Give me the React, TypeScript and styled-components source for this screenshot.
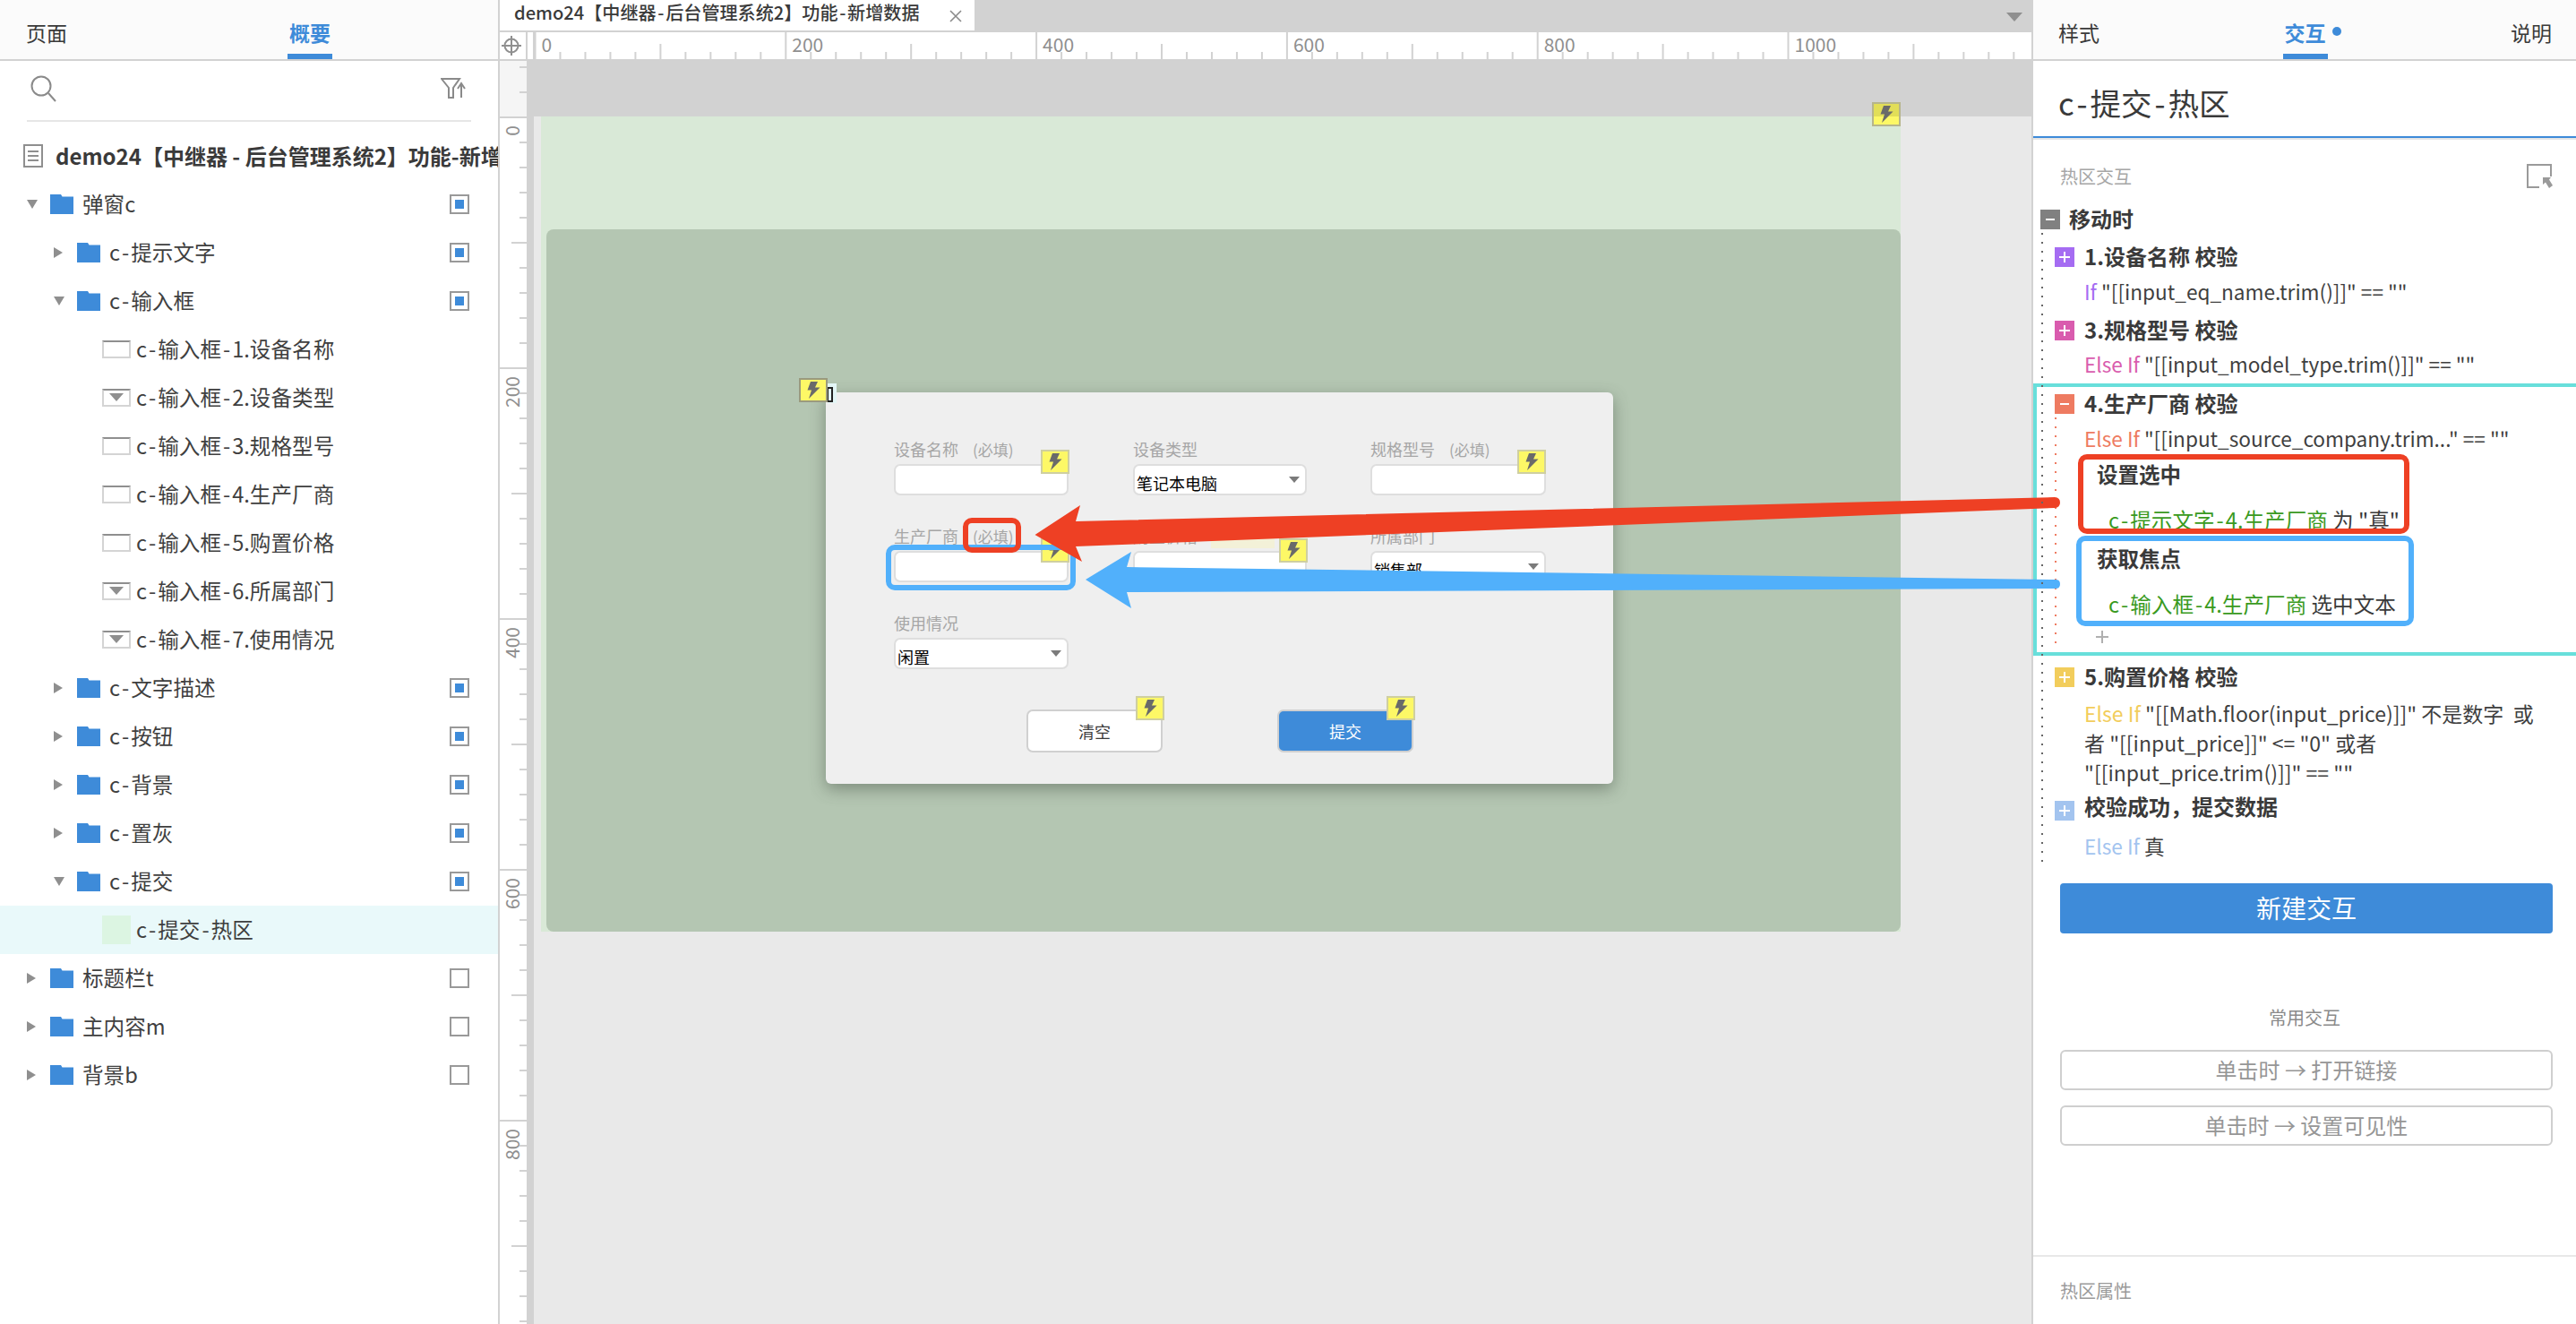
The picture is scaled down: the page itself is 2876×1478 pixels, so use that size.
import React from 'react';
import styled, { createGlobalStyle } from 'styled-components';

const FONT = `"Noto Sans CJK SC", "Noto Sans", sans-serif`;
const BLUE = '#3e8bd9';
const LINE = '#d2d2d2';
const RED = '#ee4024';
const SKY = '#51b0fb';

const Global = createGlobalStyle`
  html, body { margin: 0; padding: 0; background: #fff; overflow: hidden; }
  body { font-family: ${FONT}; color: #3a3a3a; }
  * { box-sizing: border-box; }
`;

const Page = styled.div`
  position: relative;
  display: flex;
  width: 2876px;
  height: 1478px;
  overflow: hidden;
`;

/* the reference's hyphens sit wider than this font's */
const Hyphen = styled.span`
  margin: 0 0.085em;
`;
const hy = (s: string) => {
  const parts = s.split('-');
  return parts.map((p, i) => (
    <React.Fragment key={i}>
      {p}
      {i < parts.length - 1 && <Hyphen>-</Hyphen>}
    </React.Fragment>
  ));
};

/* ---------- shared tabs ---------- */
const TabBar = styled.div<{ $spread?: boolean }>`
  display: flex;
  justify-content: ${p => (p.$spread ? 'space-between' : 'flex-start')};
  height: 68px;
  padding: 0 ${p => (p.$spread ? '27px 0 28px' : '0 0 29px')};
  background: #fbfbfb;
  border-bottom: 2px solid ${LINE};
`;
const Tab = styled.div<{ $active?: boolean; $gap?: number }>`
  position: relative;
  height: 66px;
  padding-top: 17px;
  margin-left: ${p => p.$gap ?? 0}px;
  font-size: 23px;
  line-height: 38px;
  color: ${p => (p.$active ? BLUE : '#3a3a3a')};
  font-weight: ${p => (p.$active ? 700 : 400)};
  &::after {
    content: '';
    display: ${p => (p.$active ? 'block' : 'none')};
    position: absolute;
    left: -2px;
    right: -2px;
    bottom: 0;
    height: 6px;
    background: ${BLUE};
  }
`;
const TabDot = styled.span`
  position: absolute;
  left: 53px;
  top: 30px;
  width: 10px;
  height: 10px;
  border-radius: 50%;
  background: ${BLUE};
`;

/* ---------- left panel ---------- */
const LeftPanel = styled.aside`
  flex: none;
  width: 558px;
  height: 100%;
  border-right: 2px solid ${LINE};
  background: #fff;
`;
const SearchRow = styled.div`
  display: flex;
  align-items: center;
  justify-content: space-between;
  height: 68px;
  margin: 0 30px;
  padding: 0 6px 4px 4px;
  border-bottom: 2px solid #e6e6e6;
`;
const DocRow = styled.div`
  display: flex;
  align-items: center;
  height: 65px;
  padding: 11px 0 0 26px;
  gap: 14px;
  white-space: nowrap;
  overflow: hidden;
  font-size: 24px;
  font-weight: 700;
  color: #3a3a3a;
`;
const DocTitle = styled.span`
  padding-bottom: 2px;
`;
const Tree = styled.div`
  display: flex;
  flex-direction: column;
`;
const TreeRow = styled.div<{ $lvl: number; $leaf?: boolean; $sel?: boolean }>`
  display: flex;
  align-items: center;
  height: 54px;
  padding-left: ${p => (p.$leaf ? 114 : 30 + p.$lvl * 30)}px;
  padding-right: 32px;
  font-size: 23.6px;
  white-space: nowrap;
  color: #3f3f3f;
  background: ${p => (p.$sel ? '#e9f9fa' : 'transparent')};
`;
const Caret = styled.span`
  flex: none;
  width: 26px;
  display: flex;
  align-items: center;
`;
const TriDown = styled.i`
  display: block;
  width: 0;
  height: 0;
  border-left: 6.5px solid transparent;
  border-right: 6.5px solid transparent;
  border-top: 10px solid #8f8f8f;
`;
const TriRight = styled.i`
  display: block;
  width: 0;
  height: 0;
  border-top: 6.5px solid transparent;
  border-bottom: 6.5px solid transparent;
  border-left: 10px solid #8f8f8f;
`;
const FolderLabel = styled.span`
  margin-left: 10px;
  padding-bottom: 3px;
`;
const LeafLabel = styled.span`
  margin-left: 6px;
  padding-bottom: 3px;
`;
const Check = styled.span<{ $on?: boolean }>`
  flex: none;
  margin-left: auto;
  width: 22px;
  height: 22px;
  border: 2px solid #999;
  background: #fff;
  display: flex;
  align-items: center;
  justify-content: center;
  &::after {
    content: '';
    display: ${p => (p.$on ? 'block' : 'none')};
    width: 10px;
    height: 10px;
    background: ${BLUE};
  }
`;
const WidgetIcon = styled.span<{ $drop?: boolean }>`
  flex: none;
  width: 32px;
  height: 20px;
  display: flex;
  align-items: center;
  justify-content: center;
  background: #fff;
  border: 2px solid #d4d4d4;
  border-top-color: #8f8f8f;
  &::after {
    content: '';
    display: ${p => (p.$drop ? 'block' : 'none')};
    width: 0;
    height: 0;
    margin-top: -2px;
    border-left: 8px solid transparent;
    border-right: 8px solid transparent;
    border-top: 9px solid #8f8f8f;
  }
`;
const HotIcon = styled.span`
  flex: none;
  width: 32px;
  height: 32px;
  background: #dcf5e2;
`;

/* ---------- centre ---------- */
const Center = styled.main`
  flex: none;
  width: 1710px;
  height: 100%;
  display: flex;
  flex-direction: column;
`;
const DocStrip = styled.div`
  flex: none;
  display: flex;
  align-items: flex-start;
  justify-content: space-between;
  height: 36px;
  background: ${LINE};
`;
const DocTab = styled.div`
  display: flex;
  align-items: center;
  width: 530px;
  height: 34px;
  padding: 0 14px 8px 16px;
  background: #fff;
  font-size: 20.1px;
  font-weight: 500;
  color: #3a3a3a;
  white-space: nowrap;
`;
const DocTabClose = styled.svg`
  margin: 10px 0 0 auto;
`;
const StripMenu = styled.i`
  display: block;
  margin: 14px 10px 0 0;
  width: 0;
  height: 0;
  border-left: 9px solid transparent;
  border-right: 9px solid transparent;
  border-top: 10px solid #8f8f8f;
`;
const RulerRow = styled.div`
  flex: none;
  display: flex;
  height: 32px;
  background: #fff;
  border-bottom: 2px solid ${LINE};
`;
const Corner = styled.div`
  flex: none;
  width: 31px;
  display: flex;
  align-items: center;
  justify-content: center;
  padding-right: 3px;
  border-right: 2px solid ${LINE};
`;
const CornerStrip = styled.div`
  flex: none;
  width: 8px;
  border-right: 2px solid ${LINE};
`;
const Body = styled.div`
  flex: 1;
  min-height: 0;
  display: flex;
`;
const VRuler = styled.div`
  flex: none;
  width: 30px;
  background: #fff;
`;
const GutterStrip = styled.div`
  flex: none;
  width: 8px;
  background: ${LINE};
`;
const Canvas = styled.div`
  flex: 1;
  min-width: 0;
  background: #e9e9e9;
`;
const CanvasTop = styled.div`
  height: 62px;
  background: ${LINE};
`;
const Artboard = styled.div`
  position: relative;
  width: 1518px;
  height: 910px;
  margin-left: 8px;
  padding: 126px 0 0 6px;
  background: #d9e9d7;
`;
const Shade = styled.div`
  height: 784px;
  padding: 182px 0 0 312px;
  border-radius: 8px;
  background: #b4c6b2;
`;
const Dialog = styled.div`
  position: relative;
  width: 879px;
  height: 437px;
  padding: 52px 0 0 76px;
  border-radius: 6px;
  background: #efefef;
  box-shadow: 0 6px 18px rgba(60, 70, 60, 0.45);
`;
const FormGrid = styled.div`
  display: grid;
  grid-template-columns: 267px 265px 196px;
  row-gap: 34px;
`;
const Field = styled.div<{ $w: number }>`
  position: relative;
  width: ${p => p.$w}px;
`;
const FieldLabel = styled.div`
  height: 28px;
  font-size: 18px;
  line-height: 22px;
  color: #a6a6a6;
  white-space: nowrap;
`;
const Required = styled.span`
  margin-left: 16px;
  font-size: 17px;
`;
const Tint = styled.span`
  position: absolute;
  left: 87px;
  top: 2px;
  width: 71px;
  height: 23px;
  background: #f3f1d8;
`;
const InputBox = styled.div`
  display: flex;
  align-items: center;
  justify-content: space-between;
  height: 35px;
  padding: 6px 6px 0 2px;
  background: #fff;
  border: 2px solid #dedede;
  border-radius: 7px;
  font-size: 18px;
  color: #000;
`;
const SelectArrow = styled.i`
  display: block;
  margin-top: -6px;
  width: 0;
  height: 0;
  border-left: 6px solid transparent;
  border-right: 6px solid transparent;
  border-top: 7px solid #7b7b7b;
`;
const ButtonRow = styled.div`
  display: flex;
  gap: 128px;
  margin: 45px 0 0 148px;
`;
const FormButton = styled.div<{ $primary?: boolean }>`
  position: relative;
  width: 152px;
  height: 48px;
  display: flex;
  align-items: center;
  justify-content: center;
  border: 2px solid #d0d0d0;
  border-radius: 7px;
  background: ${p => (p.$primary ? BLUE : '#fff')};
  color: ${p => (p.$primary ? '#fff' : '#3a3a3a')};
  font-size: 18px;
`;
const Marker = styled.span<{ $top: number; $right: number; $over?: boolean; $dark?: boolean }>`
  position: absolute;
  top: ${p => p.$top}px;
  right: ${p => p.$right}px;
  width: 32px;
  height: 27px;
  display: flex;
  align-items: center;
  justify-content: center;
  border: 2px solid ${p => (p.$dark ? '#9a9a7e' : p.$over ? '#b6b58c' : '#cfcfa0')};
  background: ${p => (p.$over ? 'linear-gradient(#e2de58 0 14px, #fdf866 14px)' : '#fdf866')};
`;
const Bracket = styled.span`
  position: absolute;
  left: 2px;
  top: -10px;
  width: 10px;
  height: 22px;
  padding: 4px 4px 5px 0;
  background: #e3f6f6;
  &::after {
    content: '';
    display: block;
    height: 100%;
    border: 2px solid #222;
    border-left-width: 1px;
  }
`;

/* ---------- right panel ---------- */
const RightPanel = styled.aside`
  flex: none;
  width: 608px;
  height: 100%;
  border-left: 2px solid ${LINE};
  background: #fff;
`;
const TitleBar = styled.div`
  height: 88px;
  padding: 25px 0 0 28px;
  border-bottom: 2px solid #e5e5e5;
  box-shadow: inset 0 -2px 0 ${BLUE};
  font-size: 34.6px;
  line-height: 42px;
  color: #3a3a3a;
`;
const SectionHead = styled.div`
  display: flex;
  align-items: center;
  justify-content: space-between;
  height: 30px;
  margin-top: 25px;
  padding: 0 25px 0 30px;
  font-size: 20px;
  color: #a6a6a6;
`;
const Rules = styled.div`
  position: relative;
  margin-top: 19px;
  &::before {
    content: '';
    position: absolute;
    z-index: 1;
    left: 9px;
    top: 30px;
    width: 2px;
    height: 702px;
    background: repeating-linear-gradient(#666 0 2px, transparent 2px 10px);
  }
`;
const Row = styled.div<{ $mt?: number; $pl: number; $h?: number }>`
  display: flex;
  align-items: center;
  height: ${p => p.$h ?? 30}px;
  margin-top: ${p => p.$mt ?? 0}px;
  padding-left: ${p => p.$pl}px;
  white-space: nowrap;
`;
const Heading = styled.span`
  padding-bottom: 3px;
  font-size: 24px;
  font-weight: 700;
  color: #3a3a3a;
`;
const ToggleBox = styled.span<{ $c: string; $drop?: number }>`
  position: relative;
  top: ${p => p.$drop ?? 0}px;
  flex: none;
  width: 22px;
  height: 22px;
  margin-right: 11px;
  background: ${p => p.$c};
  color: #fff;
  display: flex;
  align-items: center;
  justify-content: center;
`;
const EventBox = styled(ToggleBox)`
  margin-right: 10px;
`;
const Cond = styled.div<{ $mt?: number }>`
  margin-top: ${p => p.$mt ?? 0}px;
  padding-left: 57px;
  font-size: 22.6px;
  line-height: 30px;
  height: 30px;
  white-space: nowrap;
  color: #3f3f3f;
`;
const Indented = styled.span`
  margin-left: -4px;
`;
const CondWrap = styled.div`
  margin-top: 9px;
  padding-left: 57px;
  font-size: 23px;
  line-height: 33px;
  white-space: nowrap;
  color: #3f3f3f;
`;
const Kw = styled.span<{ $c: string }>`
  color: ${p => p.$c};
`;
const Group = styled.div`
  position: relative;
  height: 304px;
  margin-top: 6px;
  padding: 4px 0 0 0;
  border: 4px solid #68dfdb;
  border-right: none;
  &::after {
    content: '';
    position: absolute;
    left: 20px;
    top: 34px;
    width: 2px;
    height: 260px;
    background: repeating-linear-gradient(#ee7b61 0 2px, transparent 2px 10px);
  }
`;
const ActionTitle = styled.div<{ $mt: number }>`
  margin-top: ${p => p.$mt}px;
  padding-left: 67px;
  height: 30px;
  font-size: 23.5px;
  line-height: 30px;
  font-weight: 700;
  color: #3a3a3a;
`;
const ActionTarget = styled.div<{ $mt: number }>`
  margin-top: ${p => p.$mt}px;
  padding-left: 80px;
  height: 30px;
  font-size: 23.6px;
  line-height: 30px;
  white-space: nowrap;
  color: #3a3a3a;
`;
const Green = styled.span`
  color: #3a9a1e;
`;
const AddMark = styled.div`
  margin: 15px 0 0 66px;
  height: 14px;
  width: 14px;
  background:
    linear-gradient(#b0b0b0, #b0b0b0) center / 100% 2px no-repeat,
    linear-gradient(#b0b0b0, #b0b0b0) center / 2px 100% no-repeat;
`;
const PrimaryAction = styled.div`
  display: flex;
  align-items: center;
  justify-content: center;
  height: 56px;
  margin: 26px 26px 0 30px;
  padding-bottom: 3px;
  border-radius: 4px;
  background: ${BLUE};
  color: #fff;
  font-size: 28px;
`;
const CommonLabel = styled.div`
  margin-top: 80px;
  height: 28px;
  line-height: 28px;
  text-align: center;
  font-size: 20px;
  color: #8a8a8a;
`;
const QuickList = styled.div`
  display: flex;
  flex-direction: column;
  gap: 17px;
  margin: 22px 26px 0 30px;
`;
const QuickButton = styled.div`
  display: flex;
  align-items: center;
  justify-content: center;
  height: 45px;
  padding-bottom: 2px;
  border: 2px solid #cfcfcf;
  border-radius: 6px;
  font-size: 24px;
  color: #969696;
`;
const PropsHead = styled.div`
  margin-top: 122px;
  padding: 24px 0 0 30px;
  border-top: 2px solid #e8e8e8;
  font-size: 20px;
  line-height: 28px;
  color: #9a9a9a;
`;

/* ---------- annotations ---------- */
const Arrows = styled.svg`
  position: absolute;
  left: 0;
  top: 0;
  pointer-events: none;
`;
const CallOut = styled.div<{ $x: number; $y: number; $w: number; $h: number; $c: string; $r?: number }>`
  position: absolute;
  left: ${p => p.$x}px;
  top: ${p => p.$y}px;
  width: ${p => p.$w}px;
  height: ${p => p.$h}px;
  border: 6px solid ${p => p.$c};
  border-radius: ${p => p.$r ?? 10}px;
`;

/* ---------- drawings ---------- */
const Folder = () => (
  <svg width="26" height="22" viewBox="0 0 26 22" style={{ flex: 'none' }}>
    <path d="M0 0H12L13.5 2.5H26V22H0Z" fill={BLUE} />
  </svg>
);
const Bolt = () => (
  <svg width="16" height="19" viewBox="0 0 16 19">
    <path d="M5 0H13L10 6.5H15.5L3 19L6 9.5H1.5Z" fill="#6a6a6a" />
  </svg>
);
const PlusMinus = ({ plus }: { plus?: boolean }) => (
  <svg width="12" height="12" viewBox="0 0 12 12">
    <path d={plus ? 'M0 6H12M6 0V12' : 'M1 6H11'} stroke="#fff" strokeWidth="2" fill="none" />
  </svg>
);

const HRuler = () => {
  const step = 27.98;
  const items = [];
  for (let k = 0; k * step < 1671; k++) {
    const x = 0.5 + k * step;
    const major = k % 10 === 0;
    const mid = k % 5 === 0;
    items.push(<rect key={k} x={x - 1} y={major ? 0 : mid ? 13 : 22} width={2} height={major ? 30 : mid ? 17 : 8} fill={LINE} />);
    if (major) items.push(
      <text key={`t${k}`} x={x + 7} y={22} fontSize="21" fill="#8f8f8f" fontFamily={FONT}>{k * 20}</text>
    );
  }
  return <svg width="1671" height="30" style={{ display: 'block', flex: 'none' }}>{items}</svg>;
};
const VRulerArt = () => {
  const step = 28;
  const items = [];
  for (let k = -2; k < 50; k++) {
    const y = 63 + k * step;
    const major = k % 10 === 0;
    const mid = k % 5 === 0;
    items.push(<rect key={k} x={major ? 0 : mid ? 13 : 22} y={y - 1} width={major ? 30 : mid ? 17 : 8} height={2} fill={LINE} />);
    if (major && k >= 0) items.push(
      <text key={`t${k}`} transform={`translate(22 ${y + 9}) rotate(-90)`} textAnchor="end" fontSize="21" fill="#8f8f8f" fontFamily={FONT}>{k * 20}</text>
    );
  }
  return (
    <svg width="30" height="1410" style={{ display: 'block' }}>
      <rect width="30" height="62" fill="#f5f5f5" />
      {items}
    </svg>
  );
};

type Node = { t: string; lvl: number; kind: 'open' | 'closed' | 'text' | 'drop' | 'hot'; on?: boolean };
const nodes: Node[] = [
  { t: '弹窗c', lvl: 0, kind: 'open', on: true },
  { t: 'c-提示文字', lvl: 1, kind: 'closed', on: true },
  { t: 'c-输入框', lvl: 1, kind: 'open', on: true },
  { t: 'c-输入框-1.设备名称', lvl: 2, kind: 'text' },
  { t: 'c-输入框-2.设备类型', lvl: 2, kind: 'drop' },
  { t: 'c-输入框-3.规格型号', lvl: 2, kind: 'text' },
  { t: 'c-输入框-4.生产厂商', lvl: 2, kind: 'text' },
  { t: 'c-输入框-5.购置价格', lvl: 2, kind: 'text' },
  { t: 'c-输入框-6.所属部门', lvl: 2, kind: 'drop' },
  { t: 'c-输入框-7.使用情况', lvl: 2, kind: 'drop' },
  { t: 'c-文字描述', lvl: 1, kind: 'closed', on: true },
  { t: 'c-按钮', lvl: 1, kind: 'closed', on: true },
  { t: 'c-背景', lvl: 1, kind: 'closed', on: true },
  { t: 'c-置灰', lvl: 1, kind: 'closed', on: true },
  { t: 'c-提交', lvl: 1, kind: 'open', on: true },
  { t: 'c-提交-热区', lvl: 2, kind: 'hot' },
  { t: '标题栏t', lvl: 0, kind: 'closed' },
  { t: '主内容m', lvl: 0, kind: 'closed' },
  { t: '背景b', lvl: 0, kind: 'closed' },
];

const TreeItem = ({ n }: { n: Node }) => {
  if (n.lvl === 2) {
    return (
      <TreeRow $lvl={2} $leaf $sel={n.kind === 'hot'}>
        {n.kind === 'hot' ? <HotIcon /> : <WidgetIcon $drop={n.kind === 'drop'} />}
        <LeafLabel>{hy(n.t)}</LeafLabel>
      </TreeRow>
    );
  }
  return (
    <TreeRow $lvl={n.lvl}>
      <Caret>{n.kind === 'open' ? <TriDown /> : <TriRight />}</Caret>
      <Folder />
      <FolderLabel>{hy(n.t)}</FolderLabel>
      <Check $on={n.on} />
    </TreeRow>
  );
};

const Req = () => <Required>(必填)</Required>;
const DOC = 'demo24【中继器 - 后台管理系统2】功能-新增数据';

export default function App() {
  return (
    <Page>
      <Global />
      <LeftPanel>
        <TabBar>
          <Tab>页面</Tab>
          <Tab $active $gap={248}>概要</Tab>
        </TabBar>
        <SearchRow>
          <svg width="30" height="30" viewBox="0 0 30 30" fill="none" stroke="#8a8a8a" strokeWidth="2">
            <circle cx="12" cy="12" r="10.5" />
            <path d="M20 20L28 29" />
          </svg>
          <svg width="28" height="24" viewBox="0 0 28 24" fill="none" stroke="#8a8a8a" strokeWidth="2">
            <path d="M1 1H21L14 11V22H9V11Z" />
            <path d="M23 22V8M19 12L23 6L27 12" />
          </svg>
        </SearchRow>
        <DocRow>
          <svg width="22" height="26" viewBox="0 0 22 26" fill="none" stroke="#8f8f8f" strokeWidth="2" style={{ flex: 'none' }}>
            <rect x="1" y="1" width="20" height="24" />
            <path d="M5 8H17M5 13H17M5 18H17" />
          </svg>
          <DocTitle>{DOC}</DocTitle>
        </DocRow>
        <Tree>
          {nodes.map(n => <TreeItem key={n.t} n={n} />)}
        </Tree>
      </LeftPanel>

      <Center>
        <DocStrip>
          <DocTab>
            {hy(DOC)}
            <DocTabClose width="14" height="14" viewBox="0 0 14 14" stroke="#8a8a8a" strokeWidth="1.6">
              <path d="M1 1L13 13M13 1L1 13" />
            </DocTabClose>
          </DocTab>
          <StripMenu />
        </DocStrip>
        <RulerRow>
          <Corner>
            <svg width="22" height="22" viewBox="0 0 22 22" fill="none" stroke="#8f8f8f" strokeWidth="2">
              <circle cx="11" cy="11" r="7.5" />
              <path d="M11 0V22M0 11H22" />
            </svg>
          </Corner>
          <CornerStrip />
          <HRuler />
        </RulerRow>
        <Body>
          <VRuler><VRulerArt /></VRuler>
          <GutterStrip />
          <Canvas>
            <CanvasTop />
            <Artboard>
              <Marker $over $top={-16} $right={0}><Bolt /></Marker>
              <Shade>
                <Dialog>
                  <Bracket />
                  <Marker $dark $top={-16} $right={877}><Bolt /></Marker>
                  <FormGrid>
                    <Field $w={195}>
                      <FieldLabel>设备名称<Req /></FieldLabel>
                      <InputBox />
                      <Marker $top={12} $right={-1}><Bolt /></Marker>
                    </Field>
                    <Field $w={194}>
                      <FieldLabel>设备类型</FieldLabel>
                      <InputBox>笔记本电脑<SelectArrow /></InputBox>
                    </Field>
                    <Field $w={196}>
                      <FieldLabel>规格型号<Req /></FieldLabel>
                      <InputBox />
                      <Marker $top={12} $right={0}><Bolt /></Marker>
                    </Field>
                    <Field $w={195}>
                      <FieldLabel>生产厂商<Req /></FieldLabel>
                      <InputBox />
                      <Marker $top={14} $right={-1}><Bolt /></Marker>
                    </Field>
                    <Field $w={194}>
                      <FieldLabel>购置价格</FieldLabel>
                      <Tint />
                      <InputBox />
                      <Marker $top={14} $right={-1}><Bolt /></Marker>
                    </Field>
                    <Field $w={196}>
                      <FieldLabel>所属部门</FieldLabel>
                      <InputBox>销售部<SelectArrow /></InputBox>
                    </Field>
                    <Field $w={195}>
                      <FieldLabel>使用情况</FieldLabel>
                      <InputBox>闲置<SelectArrow /></InputBox>
                    </Field>
                  </FormGrid>
                  <ButtonRow>
                    <FormButton>清空<Marker $top={-17} $right={-4}><Bolt /></Marker></FormButton>
                    <FormButton $primary>提交<Marker $top={-17} $right={-4}><Bolt /></Marker></FormButton>
                  </ButtonRow>
                </Dialog>
              </Shade>
            </Artboard>
          </Canvas>
        </Body>
      </Center>

      <RightPanel>
        <TabBar $spread>
          <Tab>样式</Tab>
          <Tab $active>交互<TabDot /></Tab>
          <Tab>说明</Tab>
        </TabBar>
        <TitleBar>{hy('c-提交-热区')}</TitleBar>
        <SectionHead>
          热区交互
          <svg width="30" height="27" viewBox="0 0 30 27" fill="none" stroke="#9a9a9a" strokeWidth="2">
            <path d="M27 14V1H1V26H14" />
            <path d="M18 15H27L25 17.5L29 24L25 27L21 20.5L18 23Z" fill="#9a9a9a" stroke="none" />
          </svg>
        </SectionHead>
        <Rules>
          <Row $pl={8}>
            <EventBox $c="#808080"><PlusMinus /></EventBox>
            <Heading>移动时</Heading>
          </Row>
          <Row $mt={12} $pl={24}>
            <ToggleBox $c="#a56cf2"><PlusMinus plus /></ToggleBox>
            <Heading>1.设备名称 校验</Heading>
          </Row>
          <Cond $mt={9}><Kw $c="#a56cf2">If</Kw> "[[input_eq_name.trim()]]" == ""</Cond>
          <Row $mt={13} $pl={24}>
            <ToggleBox $c="#d95cae"><PlusMinus plus /></ToggleBox>
            <Heading>3.规格型号 校验</Heading>
          </Row>
          <Cond $mt={8}><Kw $c="#d95cae">Else If</Kw> "[[input_model_type.trim()]]" == ""</Cond>
          <Group>
            <Row $pl={20}>
              <ToggleBox $c="#ee7b61"><PlusMinus /></ToggleBox>
              <Heading>4.生产厂商 校验</Heading>
            </Row>
            <Cond $mt={9}>
              <Indented><Kw $c="#ee7b61">Else If</Kw> "[[input_source_company.trim..." == ""</Indented>
            </Cond>
            <ActionTitle $mt={9}>设置选中</ActionTitle>
            <ActionTarget $mt={21}><Green>{hy('c-提示文字-4.生产厂商')}</Green> 为 "真"</ActionTarget>
            <ActionTitle $mt={13}>获取焦点</ActionTitle>
            <ActionTarget $mt={21}><Green>{hy('c-输入框-4.生产厂商')}</Green> 选中文本</ActionTarget>
            <AddMark />
          </Group>
          <Row $mt={9} $pl={24}>
            <ToggleBox $c="#f2cd5c"><PlusMinus plus /></ToggleBox>
            <Heading>5.购置价格 校验</Heading>
          </Row>
          <CondWrap>
            <Kw $c="#f2cd5c">Else If</Kw> "[[Math.floor(input_price)]]" 不是数字&nbsp; 或<br />
            者 "[[input_price]]" &lt;= "0" 或者<br />
            "[[input_price.trim()]]" == ""
          </CondWrap>
          <Row $mt={7} $pl={24}>
            <ToggleBox $c="#a3c4ef" $drop={4}><PlusMinus plus /></ToggleBox>
            <Heading>校验成功，提交数据</Heading>
          </Row>
          <Cond $mt={14}><Kw $c="#a3c4ef">Else If</Kw> 真</Cond>
        </Rules>
        <PrimaryAction>新建交互</PrimaryAction>
        <CommonLabel>常用交互</CommonLabel>
        <QuickList>
          <QuickButton>单击时 → 打开链接</QuickButton>
          <QuickButton>单击时 → 设置可见性</QuickButton>
        </QuickList>
        <PropsHead>热区属性</PropsHead>
      </RightPanel>

      <CallOut $x={989} $y={608} $w={212} $h={51} $c={SKY} />
      <CallOut $x={1075} $y={578} $w={65} $h={39} $c={RED} />
      <CallOut $x={2320} $y={507} $w={370} $h={89} $c={RED} />
      <CallOut $x={2318} $y={598} $w={377} $h={101} $c={SKY} />
      <Arrows width="2876" height="1478" viewBox="0 0 2876 1478">
        <path d="M1212 647L1263 616L1258 633L2295 647Q2300 647 2300 652Q2300 657 2295 657L1258 661L1263 679Z" fill={SKY} />
        <path d="M1155.5 597L1206 564L1201 582L2294 555Q2300 555.5 2300 561Q2300 566.5 2294 567L1201 610L1208 627Z" fill={RED} />
      </Arrows>
    </Page>
  );
}
